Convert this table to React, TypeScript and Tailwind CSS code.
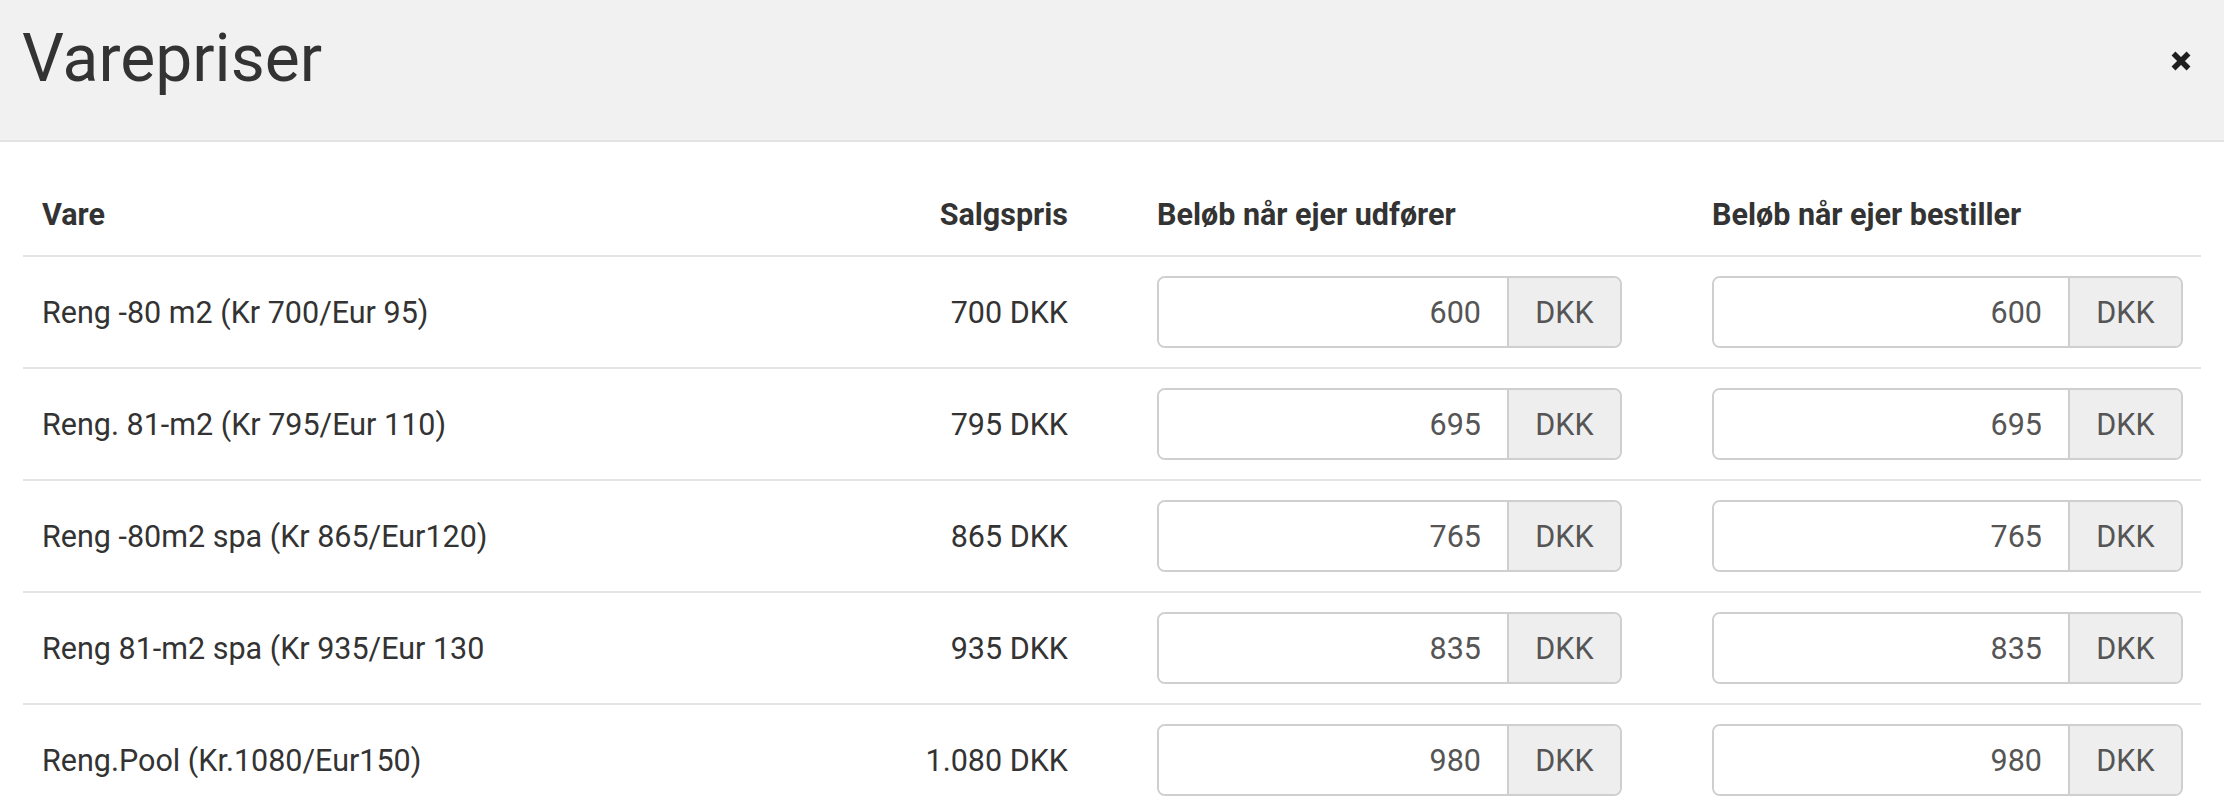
import React from "react";

const rows = [
  { name: "Reng -80 m2 (Kr 700/Eur 95)", price: "700 DKK", a: "600", b: "600" },
  { name: "Reng. 81-m2 (Kr 795/Eur 110)", price: "795 DKK", a: "695", b: "695" },
  { name: "Reng -80m2 spa (Kr 865/Eur120)", price: "865 DKK", a: "765", b: "765" },
  { name: "Reng 81-m2 spa (Kr 935/Eur 130", price: "935 DKK", a: "835", b: "835" },
  { name: "Reng.Pool (Kr.1080/Eur150)", price: "1.080 DKK", a: "980", b: "980" },
];

function MoneyInput({ value, wide }: { value: string; wide?: boolean }) {
  return (
    <div
      className={
        (wide ? "w-[471px]" : "w-[465px]") +
        " h-[72px] flex border-2 border-[#cfcfcf] rounded-[8px] overflow-hidden"
      }
    >
      <div className="flex-1 bg-white flex items-center justify-end pr-[26px] text-[#555]">
        {value}
      </div>
      <div className="w-[113px] bg-[#eeeeee] border-l-2 border-[#cfcfcf] flex items-center justify-center text-[#555]">
        DKK
      </div>
    </div>
  );
}

export default function App() {
  return (
    <div className="w-[2224px] h-[804px] overflow-hidden bg-white text-[#333] font-[Roboto,Arial,sans-serif]">
      <div className="h-[142px] bg-[#f1f1f1] border-b-2 border-[#e3e3e3] flex justify-between items-start pl-[22px] pr-[32px]">
        <h1 className="mt-[26px] text-[66px] leading-[66px] font-normal text-[#333]">Varepriser</h1>
        <button className="mt-[50px] w-[22px] h-[22px]" aria-label="close">
          <svg width="22" height="22" viewBox="0 0 22 22">
            <path d="M3.5 3.5 L18.5 18.5 M18.5 3.5 L3.5 18.5" stroke="#1f1f1f" strokeWidth="5.5" strokeLinecap="butt" />
          </svg>
        </button>
      </div>
      <div className="px-[23px] text-[30.5px] leading-[43px]">
        <div className="grid grid-cols-[777px_285px_610px_506px] h-[115px] items-end pb-[19px] border-b-2 border-[#e4e4e4] font-bold">
          <div className="pl-[19px]">Vare</div>
          <div className="pr-[17px] text-right">Salgspris</div>
          <div className="pl-[72px]">Beløb når ejer udfører</div>
          <div className="pl-[17px]">Beløb når ejer bestiller</div>
        </div>
        {rows.map((r) => (
          <div
            key={r.name}
            className="grid grid-cols-[777px_285px_610px_506px] h-[112px] items-center border-b-2 border-[#e4e4e4]"
          >
            <div className="pl-[19px]">{r.name}</div>
            <div className="pr-[17px] text-right">{r.price}</div>
            <div className="pl-[72px]">
              <MoneyInput value={r.a} />
            </div>
            <div className="pl-[17px]">
              <MoneyInput value={r.b} wide />
            </div>
          </div>
        ))}
      </div>
    </div>
  );
}
